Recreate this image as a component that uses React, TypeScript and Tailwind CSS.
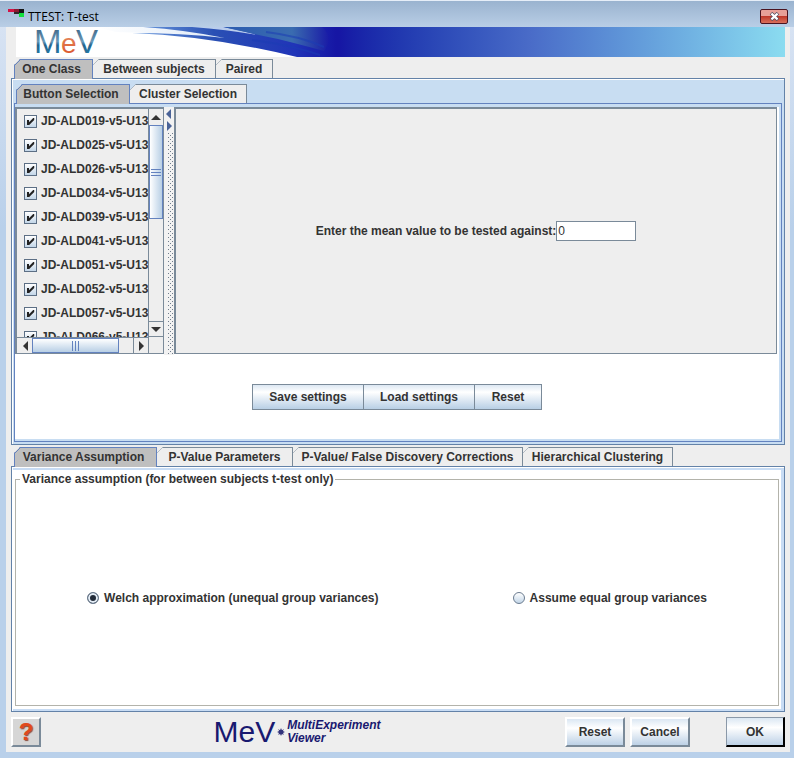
import React, { useState } from "react";

const samples = [
  "JD-ALD019-v5-U13",
  "JD-ALD025-v5-U13",
  "JD-ALD026-v5-U13",
  "JD-ALD034-v5-U13",
  "JD-ALD039-v5-U13",
  "JD-ALD041-v5-U13",
  "JD-ALD051-v5-U13",
  "JD-ALD052-v5-U13",
  "JD-ALD057-v5-U13",
  "JD-ALD066-v5-U13",
];

type Tab = { name: string; width: string };

const designTabs: Tab[] = [
  { name: "One Class", width: "w-[79px]" },
  { name: "Between subjects", width: "w-[123px]" },
  { name: "Paired", width: "w-[57px]" },
];
const selectionTabs: Tab[] = [
  { name: "Button Selection", width: "w-[114px]" },
  { name: "Cluster Selection", width: "w-[117px]" },
];
const parameterTabs: Tab[] = [
  { name: "Variance Assumption", width: "w-[143px]" },
  { name: "P-Value Parameters", width: "w-[136px]" },
  { name: "P-Value/ False Discovery Corrections", width: "w-[230px]" },
  { name: "Hierarchical Clustering", width: "w-[150px]" },
];

function Tabs({ label, tabs, className }: { label: string; tabs: Tab[]; className: string }) {
  const [active, setActive] = useState(0);
  return (
    <div role="tablist" aria-label={label} className={"flex h-[19px] " + className}>
      {tabs.map((tab, i) => (
        <button
          key={tab.name}
          type="button"
          role="tab"
          aria-selected={i === active}
          onClick={() => setActive(i)}
          className={
            "relative flex shrink-0 items-start justify-center whitespace-nowrap border-t border-r leading-[19px] [clip-path:polygon(0_6px,6px_0,100%_0,100%_100%,0_100%)] " +
            tab.width +
            (i === 0 ? " border-l pr-1" : "") +
            (i === active ? " z-10 h-5 border-[#6382bf] bg-[#bfbfbf]" : " h-[19px] border-[#7a8a99] bg-[#eeeeee]")
          }
        >
          <svg className="absolute -top-px -left-px size-[7px]" viewBox="0 0 7 7" aria-hidden="true">
            <path d="M0.5 6.5L6.5 0.5" stroke={i === active ? "#6382bf" : "#7a8a99"} fill="none" />
          </svg>
          {tab.name}
        </button>
      ))}
    </div>
  );
}

function Sample({ name }: { name: string }) {
  return (
    <label className="flex h-6 shrink-0 items-center gap-1 whitespace-nowrap">
      <span className="relative size-[13px] shrink-0">
        <input
          type="checkbox"
          defaultChecked
          className="peer block size-[13px] appearance-none border border-[#5c6f85] bg-linear-to-b from-white to-[#c3d6e8]"
        />
        <svg
          className="pointer-events-none absolute top-0 left-0 hidden size-[13px] peer-checked:block"
          viewBox="0 0 13 13"
          aria-hidden="true"
        >
          <path d="M3 5H5V7.3L9.2 3H10.2V5L5.2 10H3Z" fill="#222" />
        </svg>
      </span>
      {name}
    </label>
  );
}

function Arrow({ points }: { points: string }) {
  return (
    <svg className="size-2.5 shrink-0" viewBox="0 0 10 10" aria-hidden="true">
      <polygon points={points} fill="currentColor" />
    </svg>
  );
}

function Banner() {
  return (
    <div className="mr-[5px] ml-[10px] h-[30px] bg-linear-to-r from-[#1616a4] from-42% via-[#4a6cc8] via-67% to-[#8bdcf0]">
      <svg className="block h-[30px] w-[320px] overflow-visible" viewBox="0 0 320 30" role="img" aria-label="MeV">
        <defs>
          <linearGradient id="steel" x1="0" y1="0" x2="0" y2="1">
            <stop offset="0" stopColor="#2d5274" />
            <stop offset="0.5" stopColor="#6a9ab9" />
            <stop offset="0.6" stopColor="#24648e" />
            <stop offset="1" stopColor="#2886b0" />
          </linearGradient>
          <linearGradient id="flame" x1="0" y1="0" x2="0" y2="1">
            <stop offset="0" stopColor="#e89a70" />
            <stop offset="1" stopColor="#d84a20" />
          </linearGradient>
          <linearGradient id="wave" x1="0" y1="0" x2="1" y2="0">
            <stop offset="0" stopColor="#6f9fe0" />
            <stop offset="0.4" stopColor="#2a50b4" />
            <stop offset="0.8" stopColor="#2034b8" />
            <stop offset="1" stopColor="#1616a4" />
          </linearGradient>
          <linearGradient id="teal" x1="0" y1="0" x2="1" y2="0">
            <stop offset="0" stopColor="#2c5cb0" />
            <stop offset="0.65" stopColor="#3a6cb0" />
            <stop offset="1" stopColor="#1a1ca6" />
          </linearGradient>
          <linearGradient id="haze" x1="0" y1="0" x2="1" y2="0">
            <stop offset="0" stopColor="#ffffff" />
            <stop offset="1" stopColor="#dfeaf8" />
          </linearGradient>
        </defs>
        <path d="M0 0H300V30H0Z" fill="#fff" />
        <path d="M80 0H210V11Q170 7 100 5Z" fill="url(#haze)" />
        <path d="M116 6Q195 9 281 30H320V0H127Q170 3 209 11Q165 6 116 6Z" fill="url(#wave)" />
        <path d="M176 0Q212 3 242 8Q224 3 207 0Z" fill="#c9daf2" opacity="0.9" />
        <path d="M208 0Q228 5 262 12Q290 19 308 24Q318 10 306 0Z" fill="url(#teal)" />
        <path d="M250 5Q284 9 308 20M236 13Q276 18 304 28" stroke="#1c3cb4" strokeWidth="2" fill="none" opacity="0.55" />
        <g fontFamily="'Liberation Sans', Arial, sans-serif" fontWeight="400">
          <text x="18" y="26" fontSize="33" fill="url(#steel)">M</text>
          <text x="45" y="26" fontSize="28" fill="url(#flame)">e</text>
          <text x="60" y="26" fontSize="33" fill="url(#steel)">V</text>
        </g>
      </svg>
    </div>
  );
}

const raised =
  "h-[30px] w-[60px] border-2 border-t-white border-l-white border-r-[#7a8a99] border-b-[#7a8a99] bg-linear-to-b from-[#dbe7f3] via-white via-35% to-[#bdd1e6]";
const flat = "h-[26px] border border-[#7a8a99] bg-linear-to-b from-[#dde8f3] via-white via-30% to-[#b8cfe5]";
const radio =
  "size-3 shrink-0 appearance-none rounded-full border border-[#6b7c90] bg-linear-to-b from-white to-[#c3d6e8] checked:bg-none checked:bg-[#222b38] checked:shadow-[inset_0_0_0_2px_#e4edf6]";

export default function App() {
  return (
    <div className="flex min-h-screen flex-col bg-linear-to-b from-[#dbe5f4] to-[#b9d0ea] to-30% pr-1 pb-1.5 pl-1.5 font-['Liberation_Sans',Arial,sans-serif] text-[12px] leading-[14px] font-bold text-[#333333]">
      <header className="-mr-1 -ml-1.5 flex h-[27px] items-center border-t border-[#e6eef8] bg-linear-to-b from-[#9ab3cf] to-[#b9cee6] pr-1.5 pl-2 font-['Open_Sans',sans-serif] font-normal text-black">
        <svg className="mt-[-3px] mr-1 h-2 w-4" viewBox="0 0 16 8" aria-hidden="true">
          <path d="M0 0H6V3H0Z" fill="#d31245" />
          <path d="M6 0H11V3H6Z" fill="#8c1830" />
          <path d="M11 0H16V4H11Z" fill="#151515" />
          <path d="M6 3H11V5H6Z" fill="#33252b" />
          <path d="M11 4H16V8H11Z" fill="#12e03c" />
        </svg>
        <h1 className="flex-1 pt-1.5">TTEST: T-test</h1>
        <button
          type="button"
          aria-label="Close"
          className="mt-1 flex h-[15px] w-7 items-center justify-center rounded-xs border border-[#4a1420] bg-linear-to-b from-[#e8a098] from-45% via-[#c0392b] via-50% to-[#d9705c]"
        >
          <svg className="h-[9px] w-[11px]" viewBox="0 0 11 9" aria-hidden="true">
            <path d="M2 1.2L9 7.8M9 1.2L2 7.8" stroke="#4b4b5c" strokeWidth="3.6" />
            <path d="M2.4 1.6L8.6 7.4M8.6 1.6L2.4 7.4" stroke="#fff" strokeWidth="2.2" />
          </svg>
        </button>
      </header>

      <main className="flex flex-1 flex-col bg-[#eeeeee]">
        <Banner />
        <div className="flex flex-1 flex-col pt-0.5 pr-[5px] pl-[5px]">
          <Tabs label="Design" tabs={designTabs} className="pl-[3px]" />
          <section className="border border-[#6382a8] bg-[#c8ddf2] px-0.5 pt-1 pb-0.5 shadow-[inset_1px_1px_0_#fff]">
            <Tabs label="Selection" tabs={selectionTabs} className="mt-px pl-0.5" />
            <div className="border border-[#6382bf] bg-[#c8ddf2] pt-[3px] pr-0.5 pb-0.5">
              <div className="bg-white">
                <div className="flex h-[248px] pr-0.5">
                  <div className="grid h-[247px] w-[149px] shrink-0 grid-cols-[1fr_16px] grid-rows-[1fr_16px] border-2 border-r-0 border-b border-[#7a8a99] bg-[#eeeeee]">
                    <div className="flex flex-col overflow-hidden pl-[7px]">
                      {samples.map((name) => (
                        <Sample key={name} name={name} />
                      ))}
                    </div>
                    <div className="flex flex-col border-x border-[#7a8a99]">
                      <div className="flex h-4 items-center justify-center">
                        <Arrow points="5,3 10,8 0,8" />
                      </div>
                      <div className="flex h-[94px] flex-col items-center justify-center gap-0.5 border border-[#6382bf] bg-linear-to-r from-white to-[#b8cfe5]">
                        <i className="h-px w-2.5 bg-[#6382bf]" />
                        <i className="h-px w-2.5 bg-[#6382bf]" />
                        <i className="h-px w-2.5 bg-[#6382bf]" />
                      </div>
                      <div className="flex-1" />
                      <div className="flex h-4 items-center justify-center border-y border-[#7a8a99]">
                        <Arrow points="0,3 10,3 5,8" />
                      </div>
                    </div>
                    <div className="flex border-t border-[#7a8a99]">
                      <div className="flex w-[15px] items-center justify-center">
                        <Arrow points="8,0 8,10 3,5" />
                      </div>
                      <div className="flex w-[87px] items-center justify-center gap-0.5 border border-[#6382bf] bg-linear-to-b from-white to-[#b8cfe5]">
                        <i className="h-2.5 w-px bg-[#6382bf]" />
                        <i className="h-2.5 w-px bg-[#6382bf]" />
                        <i className="h-2.5 w-px bg-[#6382bf]" />
                      </div>
                      <div className="flex-1" />
                      <div className="flex w-[15px] items-center justify-center border-l border-[#7a8a99]">
                        <Arrow points="3,0 3,10 8,5" />
                      </div>
                    </div>
                    <div className="border-x border-[#7a8a99]" />
                  </div>
                  <div className="flex w-[10px] shrink-0 flex-col items-center gap-0.5 bg-[#f2f2f2] pt-0.5 text-[#4a6398]">
                    <Arrow points="7,0 7,10 2,5" />
                    <Arrow points="3,0 3,10 8,5" />
                    <svg className="w-1.5 flex-1 self-end" aria-hidden="true">
                      <defs>
                        <pattern id="grip" width="4" height="4" patternUnits="userSpaceOnUse">
                          <path d="M0 0H1V1H0ZM2 2H3V3H2Z" fill="#6f7c8c" />
                        </pattern>
                      </defs>
                      <rect width="5" height="100%" fill="url(#grip)" />
                    </svg>
                  </div>
                  <div className="flex h-[247px] flex-1 items-center justify-center border-2 border-r border-b border-[#7a8a99] bg-[#eeeeee]">
                    <label htmlFor="mean">Enter the mean value to be tested against:</label>
                    <input
                      id="mean"
                      type="text"
                      defaultValue="0"
                      className="h-5 w-20 border border-[#7a8a99] bg-white px-px font-normal"
                    />
                  </div>
                </div>
                <div className="flex h-[84px] items-center justify-center">
                  <button type="button" className={"w-[112px] " + flat}>Save settings</button>
                  <button type="button" className={"-ml-px w-[112px] " + flat}>Load settings</button>
                  <button type="button" className={"-ml-px w-[68px] " + flat}>Reset</button>
                </div>
              </div>
            </div>
          </section>

          <Tabs label="Parameters" tabs={parameterTabs} className="mt-0.5 pl-[3px]" />
          <section className="flex flex-1 flex-col border border-[#6382a8] bg-[#c8dcf4] pt-[3px] pr-[3px] pb-0.5 pl-px shadow-[inset_1px_1px_0_#fff]">
            <div className="flex flex-1 bg-white pt-0.5 pr-0.5 pb-[3px] pl-0.5">
              <fieldset className="flex flex-1 border border-[#b3b3ab] px-1">
                <legend className="px-0.5">Variance assumption (for between subjects t-test only)</legend>
                <div className="flex flex-1 items-center justify-around pt-1">
                  <label className="flex items-center gap-[5px]">
                    <input type="radio" name="variance" defaultChecked className={radio} />
                    Welch approximation (unequal group variances)
                  </label>
                  <label className="flex items-center gap-[5px]">
                    <input type="radio" name="variance" className={radio} />
                    Assume equal group variances
                  </label>
                </div>
              </fieldset>
            </div>
          </section>

          <footer className="flex h-10 items-center">
            <button
              type="button"
              aria-label="Help"
              className="flex size-[30px] items-center justify-center border-2 border-t-white border-r-[#7a8a99] border-b-[#7a8a99] border-l-white bg-[#d6d6d6] text-[24px] leading-none text-[#e04a1c] [text-shadow:1px_1px_1px_#8a4a3a]"
            >
              ?
            </button>
            <div className="flex flex-1 items-center justify-center pr-3 text-[#191970]">
              <span className="text-[30px] leading-[30px] font-normal">MeV</span>
              <svg className="mx-0.5 size-2" viewBox="0 0 8 8" aria-hidden="true">
                <circle cx="4" cy="4" r="2.6" fill="#34347c" />
                <path d="M4 0.5V7.5M0.5 4H7.5M1.5 1.5L6.5 6.5M6.5 1.5L1.5 6.5" stroke="#34347c" strokeWidth="0.8" />
              </svg>
              <span className="leading-[13px] italic">
                MultiExperiment
                <br />
                Viewer
              </span>
            </div>
            <button type="button" className={raised}>Reset</button>
            <button type="button" className={"ml-[5px] " + raised}>Cancel</button>
            <button
              type="button"
              className="ml-9 h-[30px] w-[59px] border-t border-r-2 border-b-2 border-l border-t-[#8a98a8] border-r-black border-b-black border-l-[#8a98a8] bg-linear-to-b from-[#dbe7f3] via-white via-35% to-[#bdd1e6]"
            >
              OK
            </button>
          </footer>
        </div>
      </main>
    </div>
  );
}
